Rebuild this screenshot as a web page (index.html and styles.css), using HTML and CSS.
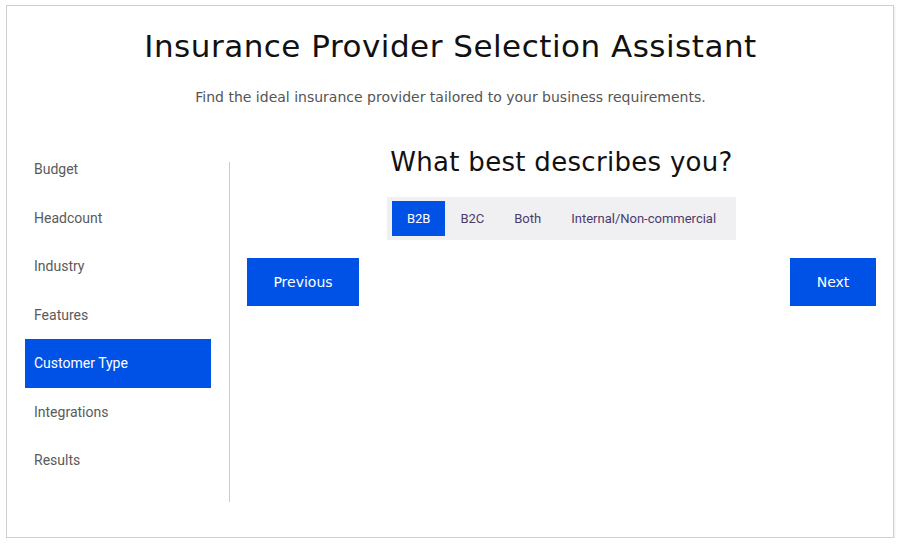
FILE: index.html
```html
<!DOCTYPE html>
<html>
<head>
<meta charset="utf-8">
<link rel="stylesheet" href="styles.css">
</head>
<body>
<div class="app">
  <header class="head">
    <h1 class="title">Insurance Provider Selection Assistant</h1>
    <p class="subtitle">Find the ideal insurance provider tailored to your business requirements.</p>
  </header>
  <div class="body">
    <nav class="steps">
      <div class="step">Budget</div>
      <div class="step">Headcount</div>
      <div class="step">Industry</div>
      <div class="step">Features</div>
      <div class="step active">Customer Type</div>
      <div class="step">Integrations</div>
      <div class="step">Results</div>
    </nav>
    <div class="divider"></div>
    <main class="main">
      <h2 class="question">What best describes you?</h2>
      <div class="seg-row">
        <div class="seg">
          <button class="seg-btn on">B2B</button>
          <button class="seg-btn">B2C</button>
          <button class="seg-btn">Both</button>
          <button class="seg-btn">Internal/Non-commercial</button>
        </div>
      </div>
      <div class="nav-row">
        <button class="btn prev">Previous</button>
        <button class="btn next">Next</button>
      </div>
    </main>
  </div>
</div>
</body>
</html>
```
FILE: styles.css
```css
* { box-sizing: border-box; }
html, body { margin: 0; padding: 0; background: #fff; }
body { padding: 5px 6px 0 6px; }
.app {
  width: 888px;
  height: 533px;
  border: 1px solid #cfcfcf;
  box-shadow: 1px 1px 2px rgba(0,0,0,0.08);
  padding: 0 17px 0 18px;
}
.head { text-align: center; }
.title {
  margin: 0;
  padding-top: 22px;
  font-family: "DejaVu Sans", sans-serif;
  font-weight: 400;
  font-size: 31px;
  letter-spacing: 0.5px;
  line-height: 36px;
  color: #111;
}
.subtitle {
  margin: 0;
  padding-top: 24px;
  font-family: "DejaVu Sans", sans-serif;
  font-size: 14px;
  line-height: 18px;
  color: #555;
}
.body {
  display: flex;
  align-items: flex-start;
  margin-top: 39px;
}
.steps {
  width: 186px;
  display: flex;
  flex-direction: column;
}
.step {
  height: 48.5px;
  display: flex;
  align-items: center;
  padding-left: 9px;
  font-family: Roboto, sans-serif;
  font-size: 14px;
  color: #5a5a5a;
}
.step.active { background: #0052e6; color: #fff; }
.divider {
  width: 1px;
  height: 340px;
  margin: 17px 17px 0 18px;
  background: #cccccc;
}
.main { flex: 1; }
.question {
  margin: 0;
  text-align: center;
  font-family: "DejaVu Sans", sans-serif;
  font-weight: 400;
  font-size: 26px;
  letter-spacing: 0.3px;
  line-height: 34px;
  color: #111;
}
.seg-row { display: flex; justify-content: center; margin-top: 18px; }
.seg {
  display: flex;
  background: #f0f0f2;
  padding: 4px 5px 4px 5px;
}
.seg-btn {
  border: 0;
  background: transparent;
  height: 35px;
  padding: 0 15px;
  font-family: Roboto, sans-serif;
  font-size: 13px;
  color: #4b3b6b;
}
.seg-btn.on { background: #0052e6; color: #fff; }
.nav-row {
  display: flex;
  justify-content: space-between;
  margin-top: 18px;
}
.btn {
  border: 0;
  height: 48px;
  background: #0052e6;
  color: #fff;
  font-family: "DejaVu Sans", sans-serif;
  font-size: 14px;
}
.prev { width: 112px; }
.next { width: 86px; }
```
